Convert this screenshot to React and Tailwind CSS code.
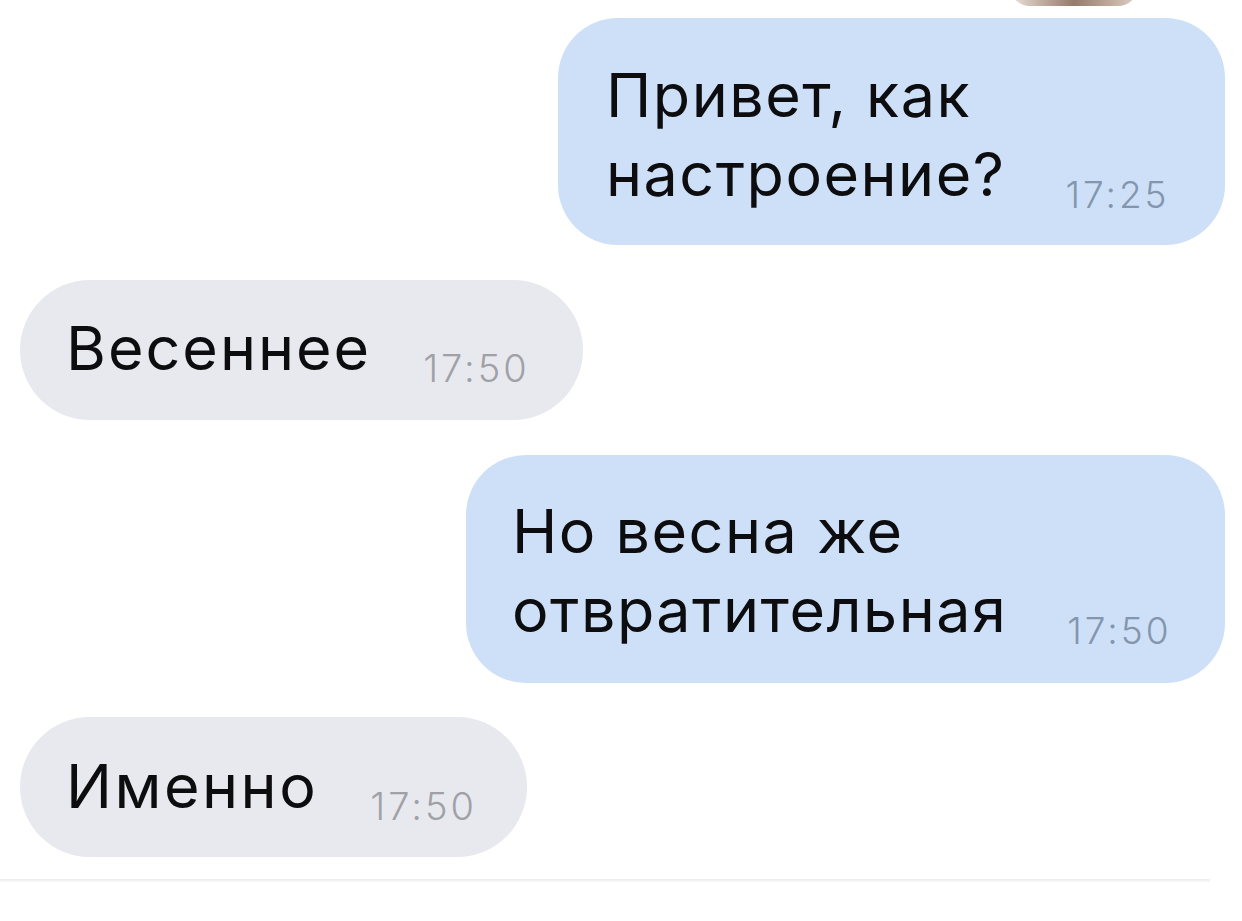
import React from "react";

const font = { fontFamily: "Inter, Roboto, 'Noto Sans', sans-serif" };

function Time({ children, gray }) {
  return (
    <span
      className={
        "inline-block align-[-12px] font-light tracking-[3px] " +
        (gray ? "text-[38px] text-[#a0a1a6] ml-[52px]" : "text-[37px] text-[#8496ad] ml-[60px]")
      }
    >
      {children}
    </span>
  );
}

export default function App() {
  return (
    <div
      className="relative w-[1242px] h-[921px] overflow-hidden bg-white text-[#0d0d0f]"
      style={font}
    >
      {/* partial element from previous message at top */}
      <div className="absolute left-[1010px] top-[-14px] w-[128px] h-[20px] rounded-b-[60px] bg-gradient-to-r from-[#e9dcd3] via-[#7a5a47] to-[#d9c6b8] opacity-80" />

      <div className="flex flex-col pt-[18px] pl-[20px] pr-[17px]">
        {/* Bubble 1 */}
        <div className="self-end w-[667px] h-[227px] rounded-[60px] bg-[#cde0f8] pl-[48px] pt-[38px]">
          <div className="text-[61px] leading-[79px] tracking-[1.5px] whitespace-nowrap">
            Привет, как
            <br />
            настроение?<Time>17:25</Time>
          </div>
        </div>

        {/* Bubble 2 */}
        <div className="mt-[35px] self-start w-[563px] h-[140px] rounded-[70px] bg-[#e8e9ee] pl-[46px] pt-[29px]">
          <div className="text-[61px] leading-[79px] tracking-[2px] whitespace-nowrap">
            Весеннее<Time gray>17:50</Time>
          </div>
        </div>

        {/* Bubble 3 */}
        <div className="mt-[35px] self-end w-[759px] h-[228px] rounded-[60px] bg-[#cde0f8] pl-[46px] pt-[37px]">
          <div className="text-[61px] leading-[79px] tracking-[1.5px] whitespace-nowrap">
            Но весна же
            <br />
            отвратительная<Time>17:50</Time>
          </div>
        </div>

        {/* Bubble 4 */}
        <div className="mt-[34px] self-start w-[507px] h-[140px] rounded-[70px] bg-[#e8e9ee] pl-[46px] pt-[30px]">
          <div className="text-[61px] leading-[79px] tracking-[2.5px] whitespace-nowrap">
            Именно<Time gray>17:50</Time>
          </div>
        </div>

        {/* bottom separator */}
        <div className="mt-[22px] -ml-[20px] w-[1210px] h-[3px] bg-gradient-to-b from-[#ececef] to-[#f8f8f9]" />
      </div>
    </div>
  );
}
